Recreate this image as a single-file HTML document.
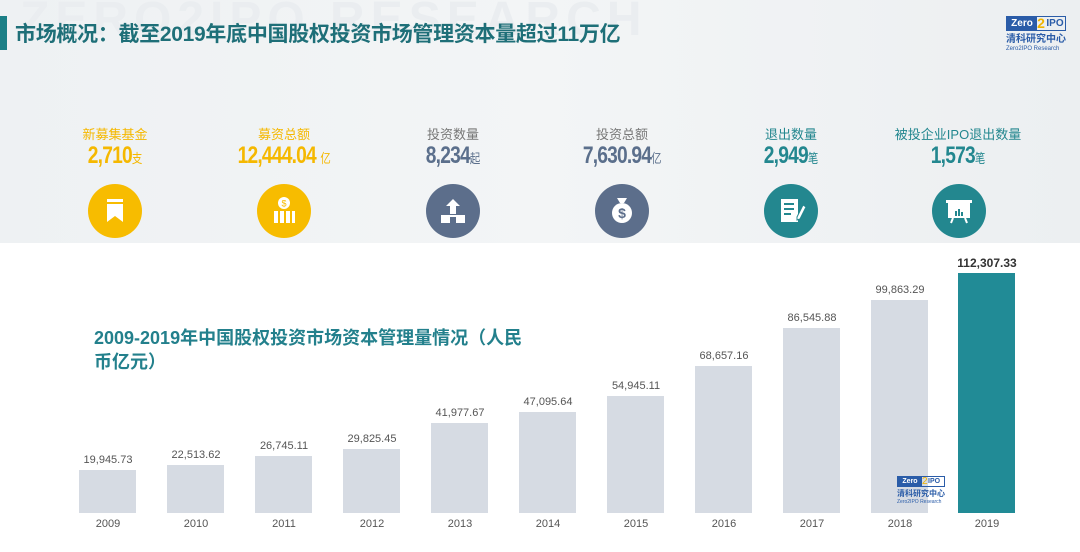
<!DOCTYPE html>
<html><head><meta charset="utf-8"><style>
*{margin:0;padding:0;box-sizing:border-box}
body{width:1080px;height:552px;overflow:hidden;background:#fff;font-family:"Liberation Sans","Noto Sans CJK SC",sans-serif;position:relative}
.top{position:absolute;left:0;top:0;width:1080px;height:243px;background:linear-gradient(90deg,#eef1f3,#f3f5f6 50%,#eceff1)}
.wm{position:absolute;left:20px;top:-8px;font-size:48px;font-weight:bold;color:#eaedf0;letter-spacing:6px;white-space:nowrap}
.bar1{position:absolute;left:0;top:16px;width:7px;height:34px;background:#1b7f86}
.title{position:absolute;left:15px;top:18px;font-size:21px;font-weight:bold;color:#1e6f78;white-space:nowrap;letter-spacing:-0.3px}
.logo{position:absolute;left:1006px;top:16px;width:60px}
.lb{display:flex;height:15px;border:1px solid #2a5ca8}
.lb span{font-size:10px;font-weight:bold;line-height:13px;text-align:center}
.stat{position:absolute;text-align:center;width:170px}
.stat .l{font-size:13px;line-height:16px}
.stat .n{font-size:24px;font-weight:bold;line-height:26px;letter-spacing:-1px;transform:scaleX(.8);display:inline-block}
.stat .u{font-size:13px;font-weight:normal;letter-spacing:0}
.ic{position:absolute;width:54px;height:54px;border-radius:50%}
.b{position:absolute;background:#d6dbe3;width:57px}
.v{position:absolute;width:100px;text-align:center;font-size:11px;color:#555}
.y{position:absolute;width:80px;text-align:center;font-size:11px;color:#555;top:518px}
.ct{position:absolute;left:94px;top:326px;font-size:18px;font-weight:bold;color:#23808c;line-height:24px;width:460px;white-space:nowrap}
</style></head><body>
<div class="top"><div class="wm">ZERO2IPO RESEARCH</div></div>
<div class="bar1"></div>
<div class="title">市场概况：截至2019年底中国股权投资市场管理资本量超过11万亿</div>
<div class="logo">
 <div class="lb"><span style="background:#2a5ca8;color:#fff;width:30px">Zero</span><span style="color:#f0b400;width:8px;font-size:14px">2</span><span style="color:#2a5ca8;width:20px">IPO</span></div>
 <div style="font-size:10px;font-weight:bold;color:#2a5ca8;line-height:13px;margin-top:2px">清科研究中心</div>
 <div style="font-size:6px;color:#2a5ca8;line-height:7px">Zero2IPO Research</div>
</div>

<div class="stat" style="left:30px;top:127px;color:#f5b800"><div class="l">新募集基金</div><div class="n">2,710<span class="u">支</span></div></div>
<div class="stat" style="left:199px;top:127px;color:#f5b800"><div class="l">募资总额</div><div class="n">12,444.04 <span class="u">亿</span></div></div>
<div class="stat" style="left:368px;top:127px;color:#5b6f8c"><div class="l" style="color:#777">投资数量</div><div class="n">8,234<span class="u">起</span></div></div>
<div class="stat" style="left:537px;top:127px;color:#5b6f8c"><div class="l" style="color:#777">投资总额</div><div class="n">7,630.94<span class="u">亿</span></div></div>
<div class="stat" style="left:706px;top:127px;color:#23878f"><div class="l">退出数量</div><div class="n">2,949<span class="u">笔</span></div></div>
<div class="stat" style="left:873px;top:127px;color:#23878f"><div class="l">被投企业IPO退出数量</div><div class="n">1,573<span class="u">笔</span></div></div>

<div class="ic" style="left:88px;top:184px;background:#f7bc00"><svg width="54" height="54"><rect x="19" y="15" width="16" height="3" fill="#fff"/><path d="M19 20h16v18l-8-6-8 6z" fill="#fff"/></svg></div>
<div class="ic" style="left:257px;top:184px;background:#f7bc00"><svg width="54" height="54"><circle cx="27" cy="19" r="6" fill="#fff"/><text x="27" y="22.5" font-size="9" text-anchor="middle" fill="#f7bc00" font-family="Liberation Sans">$</text><rect x="17" y="27" width="4" height="12" fill="#fff"/><rect x="23" y="27" width="4" height="12" fill="#fff"/><rect x="29" y="27" width="4" height="12" fill="#fff"/><rect x="35" y="27" width="3" height="12" fill="#fff"/></svg></div>
<div class="ic" style="left:426px;top:184px;background:#5c6e8b"><svg width="54" height="54"><path d="M27 15l-7 7h4v8h6v-8h4z" fill="#fff"/><rect x="15" y="31" width="24" height="8" fill="#fff"/><rect x="24" y="33" width="6" height="6" fill="#5c6e8b"/></svg></div>
<div class="ic" style="left:595px;top:184px;background:#5c6e8b"><svg width="54" height="54"><path d="M22 14h10l-3 5h-4z" fill="#fff"/><circle cx="27" cy="29" r="10" fill="#fff"/><text x="27" y="34" font-size="14" font-weight="bold" text-anchor="middle" fill="#5c6e8b" font-family="Liberation Sans">$</text></svg></div>
<div class="ic" style="left:764px;top:184px;background:#23878f"><svg width="54" height="54"><rect x="17" y="15" width="17" height="23" fill="#fff"/><rect x="20" y="19" width="10" height="2" fill="#23878f"/><rect x="20" y="24" width="10" height="2" fill="#23878f"/><rect x="20" y="29" width="7" height="2" fill="#23878f"/><path d="M33 33l6-12 3 2-6 12-3 1z" fill="#fff" stroke="#23878f"/></svg></div>
<div class="ic" style="left:932px;top:184px;background:#23878f"><svg width="54" height="54"><rect x="14" y="16" width="26" height="3" fill="#fff"/><rect x="16" y="19" width="22" height="15" fill="#fff"/><rect x="23" y="27" width="2" height="5" fill="#23878f"/><rect x="26" y="25" width="2" height="7" fill="#23878f"/><rect x="29" y="28" width="2" height="4" fill="#23878f"/><path d="M21 34l-2 5M33 34l2 5" stroke="#fff" stroke-width="2"/></svg></div>

<div class="ct">2009-2019年中国股权投资市场资本管理量情况（人民<br>币亿元）</div>

<div class="b" style="left:79px;top:470px;height:43px"></div><div class="v" style="left:58px;top:454px">19,945.73</div><div class="y" style="left:68px">2009</div>
<div class="b" style="left:167px;top:465px;height:48px"></div><div class="v" style="left:146px;top:449px">22,513.62</div><div class="y" style="left:156px">2010</div>
<div class="b" style="left:255px;top:456px;height:57px"></div><div class="v" style="left:234px;top:440px">26,745.11</div><div class="y" style="left:244px">2011</div>
<div class="b" style="left:343px;top:449px;height:64px"></div><div class="v" style="left:322px;top:433px">29,825.45</div><div class="y" style="left:332px">2012</div>
<div class="b" style="left:431px;top:423px;height:90px"></div><div class="v" style="left:410px;top:407px">41,977.67</div><div class="y" style="left:420px">2013</div>
<div class="b" style="left:519px;top:412px;height:101px"></div><div class="v" style="left:498px;top:396px">47,095.64</div><div class="y" style="left:508px">2014</div>
<div class="b" style="left:607px;top:396px;height:117px"></div><div class="v" style="left:586px;top:380px">54,945.11</div><div class="y" style="left:596px">2015</div>
<div class="b" style="left:695px;top:366px;height:147px"></div><div class="v" style="left:674px;top:350px">68,657.16</div><div class="y" style="left:684px">2016</div>
<div class="b" style="left:783px;top:328px;height:185px"></div><div class="v" style="left:762px;top:312px">86,545.88</div><div class="y" style="left:772px">2017</div>
<div class="b" style="left:871px;top:300px;height:213px"></div><div class="v" style="left:850px;top:284px">99,863.29</div><div class="y" style="left:860px">2018</div>
<div class="b" style="left:958px;top:273px;height:240px;background:#218b96"></div><div class="v" style="left:937px;top:256px;font-size:12px;font-weight:bold;color:#333">112,307.33</div><div class="y" style="left:947px">2019</div>

<div style="position:absolute;left:897px;top:476px;width:48px">
 <div style="display:flex;height:11px;border:1px solid #2a5ca8"><span style="background:#2a5ca8;color:#fff;width:24px;font-size:7px;font-weight:bold;text-align:center;line-height:9px">Zero</span><span style="color:#f0b400;font-size:10px;width:6px;line-height:9px">2</span><span style="color:#2a5ca8;font-size:7px;font-weight:bold;line-height:9px">IPO</span></div>
 <div style="font-size:8px;font-weight:bold;color:#2a5ca8;line-height:10px;margin-top:2px">清科研究中心</div>
 <div style="font-size:5px;color:#2a5ca8;line-height:6px">Zero2IPO Research</div>
</div>
</body></html>
